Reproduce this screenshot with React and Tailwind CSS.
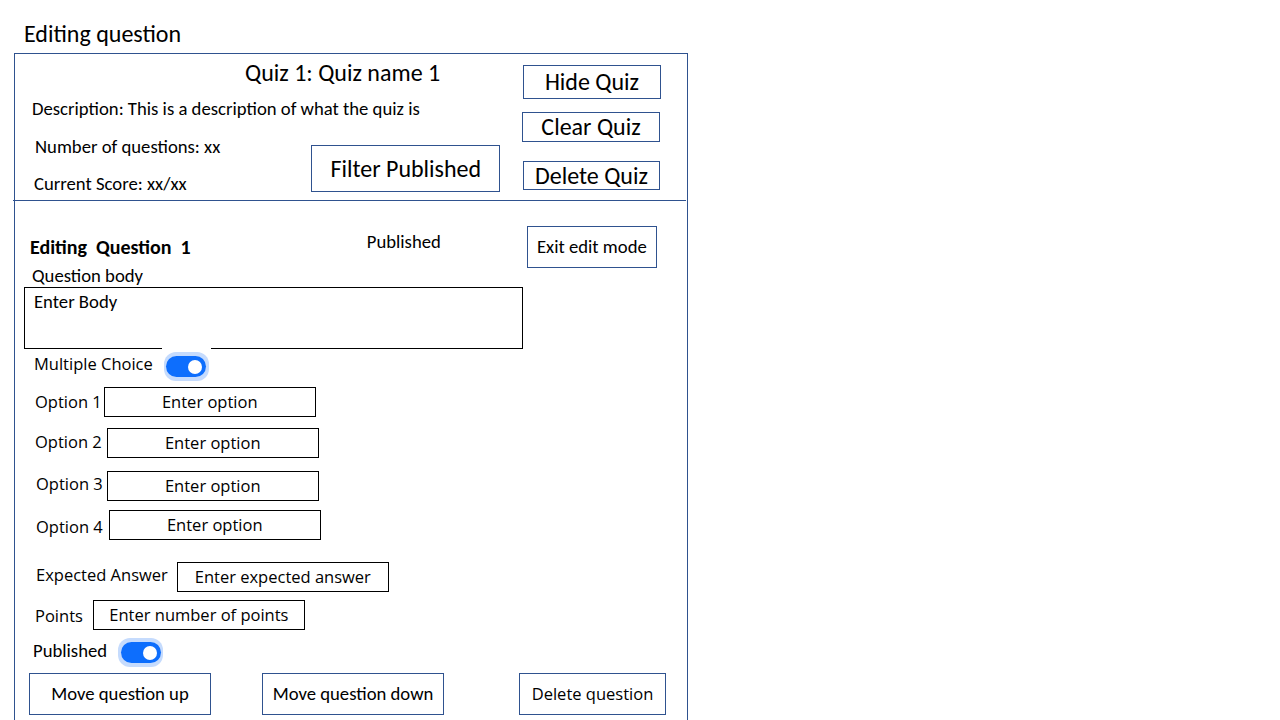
import React from 'react';

const calibri = { fontFamily: 'Carlito, Lato, "Liberation Sans", sans-serif' };
const segoe = { fontFamily: '"Open Sans", "Noto Sans", sans-serif' };

const Toggle = () => (
  <span className="inline-flex items-center justify-center w-[45px] h-[29px] rounded-[12px] bg-[#c5dbfd]">
    <span className="flex items-center justify-end w-[40px] h-[21px] rounded-full bg-[#0d6efd] pr-[4px]">
      <span className="block w-[14px] h-[14px] rounded-full bg-white" />
    </span>
  </span>
);

const OptionRow = ({ label, mt, labelMl, boxMl, labelPt }) => (
  <div className={`flex items-start ${mt}`}>
    <span className={`${labelMl} ${labelPt} text-[16.5px] leading-[22px] text-black`} style={segoe}>
      {label}
    </span>
    <div
      className={`${boxMl} w-[212px] h-[30px] border border-black flex items-center justify-center text-[16.5px] text-black`}
      style={segoe}
    >
      Enter option
    </div>
  </div>
);

export default function App() {
  return (
    <div className="w-[1280px] h-[720px] overflow-hidden bg-white">
      <div className="pl-[24px] pt-[21px] h-[53px] text-[24px] leading-[26px] text-black" style={calibri}>
        Editing question
      </div>

      <div className="ml-[14px] w-[674px] h-[700px] border border-[#2f528f]">
        {/* quiz header */}
        <div className="flex h-[146px]">
          <div className="w-[507px] flex flex-col">
            <div className="ml-[230px] mt-[5px] text-[24px] leading-[28px] text-black" style={calibri}>
              Quiz 1: Quiz name 1
            </div>
            <div className="ml-[17px] mt-[11px] text-[18.7px] leading-[22px] text-black" style={calibri}>
              Description: This is a description of what the quiz is
            </div>
            <div className="flex mt-[4px]">
              <div className="flex flex-col ml-[20px] text-[18.7px] leading-[22px] text-black" style={calibri}>
                <span className="mt-[12px]">Number of questions: xx</span>
                <span className="mt-[15px] -ml-[1px]">Current Score: xx/xx</span>
              </div>
              <div
                className="ml-[91px] mt-[21px] w-[189px] h-[47px] border border-[#2f528f] flex items-center justify-center text-[24px] text-black"
                style={calibri}
              >
                Filter Published
              </div>
            </div>
          </div>
          <div className="flex flex-col text-[24px] text-black" style={calibri}>
            <div className="mt-[11px] ml-[1px] w-[138px] h-[34px] border border-[#2f528f] flex items-center justify-center">
              Hide Quiz
            </div>
            <div className="mt-[13px] w-[138px] h-[30px] border border-[#2f528f] flex items-center justify-center">
              Clear Quiz
            </div>
            <div className="mt-[19px] ml-[1px] w-[137px] h-[29px] border border-[#2f528f] flex items-center justify-center">
              Delete Quiz
            </div>
          </div>
        </div>
        <div className="-ml-[2px] w-[673px] border-t border-[#2f528f]" />

        {/* question editor */}
        <div className="flex mt-[25px] h-[42px]">
          <span className="ml-[15px] mt-[10px] text-[20px] leading-[22px] font-bold text-black" style={calibri}>
            Editing&nbsp; Question&nbsp; 1
          </span>
          <span className="ml-[176px] mt-[5px] text-[18.7px] leading-[22px] text-black" style={calibri}>
            Published
          </span>
          <div
            className="ml-[86px] w-[130px] h-[42px] border border-[#2f528f] flex items-center justify-center text-[18.7px] text-black"
            style={calibri}
          >
            Exit edit mode
          </div>
        </div>
        <div className="ml-[17px] -mt-[3px] text-[18.7px] leading-[22px] text-black" style={calibri}>
          Question body
        </div>
        <div
          className="ml-[9px] w-[499px] h-[62px] border border-black pl-[9px] pt-[3px] text-[18.7px] leading-[22px] text-black"
          style={calibri}
        >
          Enter Body
        </div>

        <div className="flex items-start">
          <span className="ml-[19px] mt-[4px] text-[16.5px] leading-[22px] text-black" style={segoe}>
            Multiple Choice
          </span>
          <span className="ml-[9px] -mt-[4px] pt-[7px] px-[2px] bg-white flex">
            <Toggle />
          </span>
        </div>

        <OptionRow label="Option 1" mt="mt-[6px]" labelMl="ml-[20px]" boxMl="ml-[2px]" labelPt="pt-[4px]" />
        <OptionRow label="Option 2" mt="mt-[11px]" labelMl="ml-[20px]" boxMl="ml-[5px]" labelPt="pt-[3px]" />
        <OptionRow label="Option 3" mt="mt-[13px]" labelMl="ml-[21px]" boxMl="ml-[4px]" labelPt="pt-[2px]" />
        <OptionRow label="Option 4" mt="mt-[9px]" labelMl="ml-[21px]" boxMl="ml-[6px]" labelPt="pt-[6px]" />

        <div className="flex items-start mt-[22px]">
          <span className="ml-[21px] pt-[2px] text-[16.5px] leading-[22px] text-black" style={segoe}>
            Expected Answer
          </span>
          <div
            className="ml-[9px] w-[212px] h-[30px] border border-black flex items-center justify-center text-[16.5px] text-black"
            style={segoe}
          >
            Enter expected answer
          </div>
        </div>

        <div className="flex items-start mt-[8px]">
          <span className="ml-[20px] pt-[5px] text-[16.5px] leading-[22px] text-black" style={segoe}>
            Points
          </span>
          <div
            className="ml-[10px] w-[212px] h-[30px] border border-black flex items-center justify-center text-[16.5px] text-black"
            style={segoe}
          >
            Enter number of points
          </div>
        </div>

        <div className="flex items-center mt-[8px]">
          <span className="ml-[18px] -mt-[3px] text-[18.7px] leading-[22px] text-black" style={calibri}>
            Published
          </span>
          <span className="ml-[11px] flex">
            <Toggle />
          </span>
        </div>

        <div className="flex mt-[6px]">
          <div
            className="ml-[14px] w-[182px] h-[42px] border border-[#2f528f] flex items-center justify-center text-[18.7px] text-black"
            style={calibri}
          >
            Move question up
          </div>
          <div
            className="ml-[51px] w-[182px] h-[42px] border border-[#2f528f] flex items-center justify-center text-[18.7px] text-black"
            style={calibri}
          >
            Move question down
          </div>
          <div
            className="ml-[75px] w-[147px] h-[42px] border border-[#2f528f] flex items-center justify-center text-[16.5px] text-black"
            style={segoe}
          >
            Delete question
          </div>
        </div>
      </div>
    </div>
  );
}
